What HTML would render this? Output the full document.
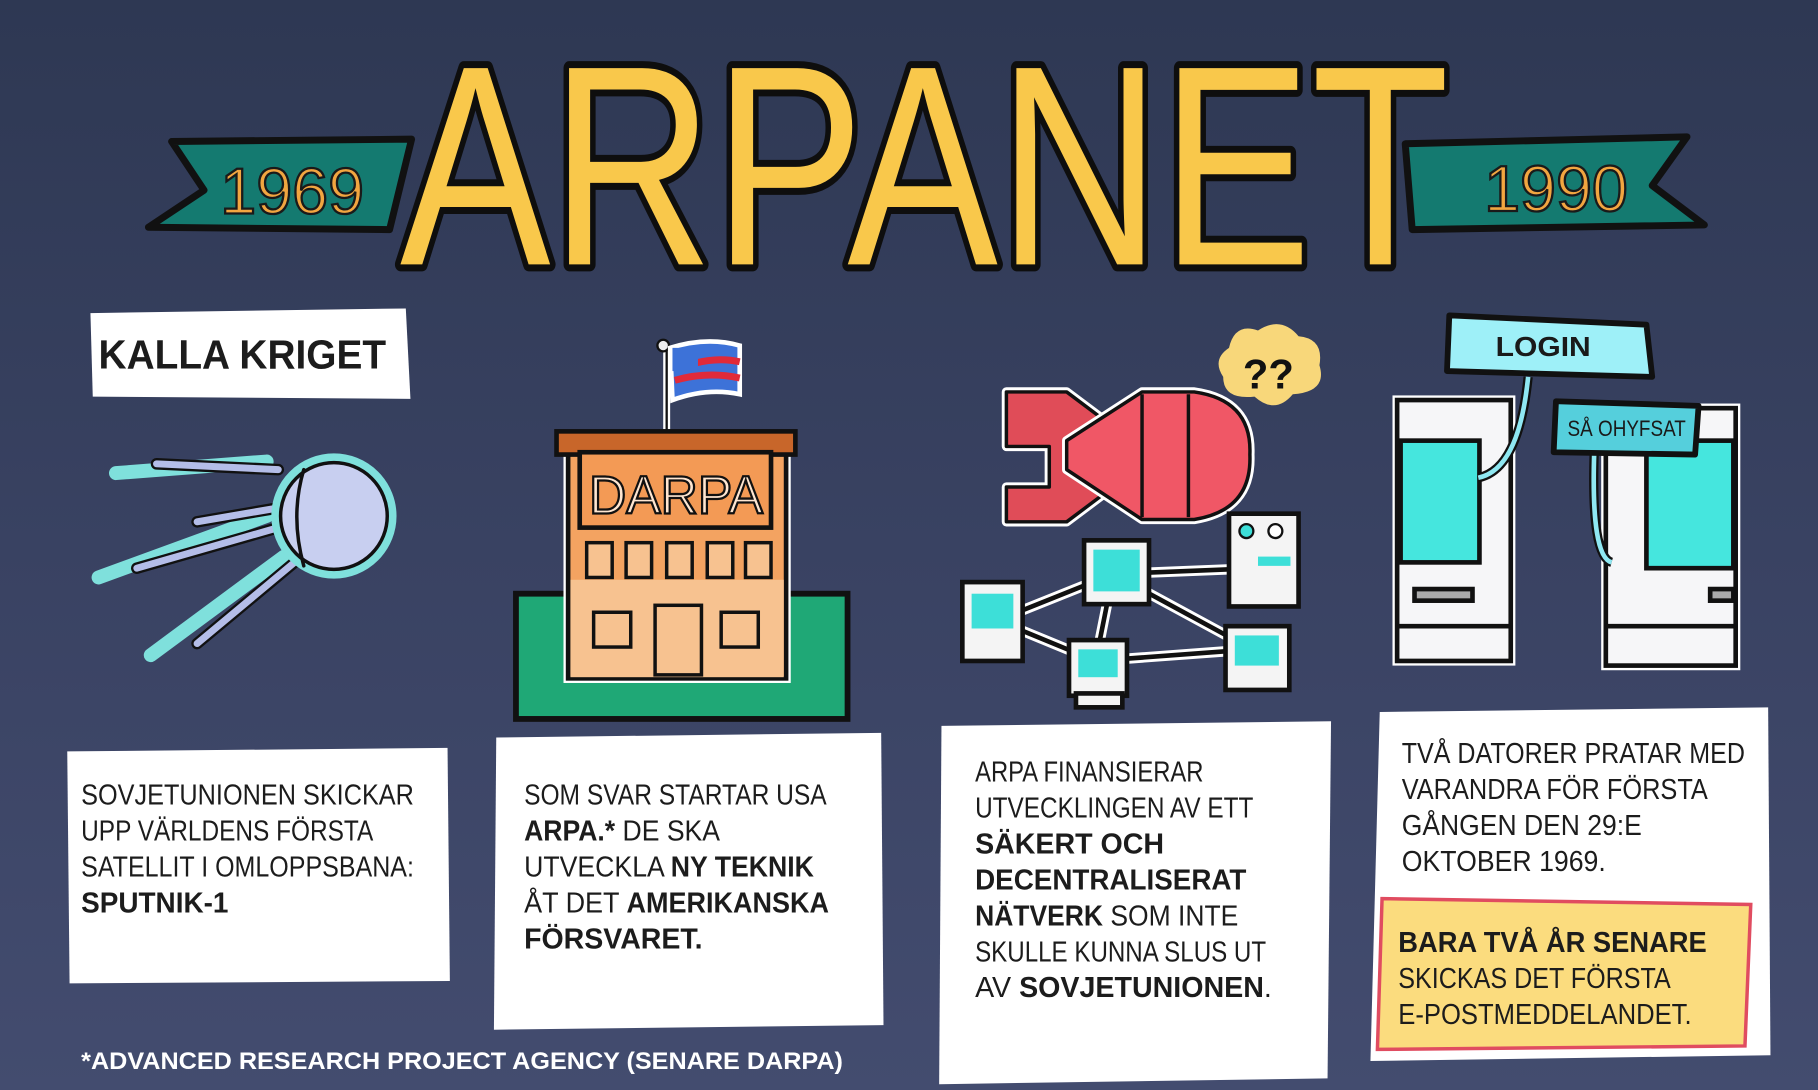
<!DOCTYPE html>
<html><head><meta charset="utf-8"><style>
html,body{margin:0;padding:0;background:#3a4365;}
svg{display:block;}
.t{font-family:"Liberation Sans",sans-serif;font-size:25px;fill:#1c1c1c;}
.b{font-weight:bold;}
</style></head><body>
<svg width="1818" height="1090" viewBox="0 0 1568 940" preserveAspectRatio="none" xmlns="http://www.w3.org/2000/svg">
<defs>
<linearGradient id="bg" x1="0" y1="0" x2="0" y2="1">
<stop offset="0" stop-color="#2e3853"/><stop offset="0.5" stop-color="#394262"/><stop offset="1" stop-color="#434c6f"/>
</linearGradient>
</defs>
<rect width="1568" height="940" fill="url(#bg)"/>

<!-- banners -->
<path d="M148,122 L355,120 L336,198 L128,196 L176,164 Z" fill="#147a70" stroke="#111" stroke-width="6" stroke-linejoin="round"/>
<text x="190" y="184" font-family="Liberation Sans,sans-serif" font-size="56" fill="#f2a640" stroke="#1a1a1a" stroke-width="2" textLength="124" lengthAdjust="spacingAndGlyphs">1969</text>
<path d="M1212,124 L1455,118 L1425,160 L1470,194 L1218,198 Z" fill="#147a70" stroke="#111" stroke-width="6" stroke-linejoin="round"/>
<text x="1280" y="182" font-family="Liberation Sans,sans-serif" font-size="56" fill="#f2a640" stroke="#1a1a1a" stroke-width="2" textLength="124" lengthAdjust="spacingAndGlyphs">1990</text>

<!-- title -->
<text x="345" y="228" font-family="Liberation Sans,sans-serif" font-size="246" fill="#f9c84b" stroke="#0e0e0e" stroke-width="12" paint-order="stroke" stroke-linejoin="round" textLength="905" lengthAdjust="spacingAndGlyphs">ARPANET</text>

<!-- kalla kriget -->
<path d="M78,270 L350,266 L354,344 L80,342 Z" fill="#fff"/>
<text x="85" y="318" font-family="Liberation Sans,sans-serif" font-weight="bold" font-size="35" fill="#1c1c1c" textLength="248" lengthAdjust="spacingAndGlyphs">KALLA KRIGET</text>

<!-- sputnik -->
<g stroke-linecap="round">
<path d="M100,408 L230,398 M85,498 L230,445 M130,565 L245,480" stroke="#7fe0dc" stroke-width="12"/>
<path d="M135,400 L240,405 M170,450 L240,438 M118,490 L240,455 M170,555 L260,480" stroke="#111" stroke-width="10"/>
<path d="M135,400 L240,405 M170,450 L240,438 M118,490 L240,455 M170,555 L260,480" stroke="#b4bde8" stroke-width="6"/>
<circle cx="288" cy="445" r="50" fill="#c8cff0" stroke="#7fe0dc" stroke-width="8"/>
<circle cx="288" cy="445" r="46" fill="#c8cff0" stroke="#111" stroke-width="3"/>
<path d="M262,405 Q250,445 262,488" stroke="#111" stroke-width="3" fill="none"/>
</g>

<!-- darpa -->
<rect x="445" y="512" width="286" height="108" fill="#1fa876" stroke="#111" stroke-width="5"/>
<line x1="575" y1="300" x2="575" y2="372" stroke="#fff" stroke-width="6"/>
<line x1="575" y1="300" x2="575" y2="372" stroke="#111" stroke-width="2"/>
<circle cx="572" cy="298" r="5" fill="#eee" stroke="#111" stroke-width="2"/>
<path d="M578,300 Q610,290 638,298 L638,340 Q610,334 580,345 Z" fill="#3d72d8" stroke="#fff" stroke-width="4"/>
<path d="M600,313 Q620,308 638,312 M582,328 Q610,320 638,326" stroke="#e02a3a" stroke-width="6" fill="none"/>
<rect x="580" y="300" width="22" height="20" fill="#3d72d8"/>
<rect x="490" y="380" width="188" height="205" fill="#f3a361" stroke="#fff" stroke-width="8"/>
<rect x="490" y="380" width="188" height="205" fill="#f3a361" stroke="#111" stroke-width="4"/>
<rect x="492" y="500" width="184" height="84" fill="#f7c290"/>
<rect x="480" y="372" width="206" height="20" fill="#c8662a" stroke="#111" stroke-width="4"/>
<rect x="500" y="390" width="165" height="65" fill="#f39a55" stroke="#111" stroke-width="4"/>
<text x="508" y="443" font-family="Liberation Sans,sans-serif" font-size="46" fill="#ffe6d0" stroke="#111" stroke-width="2" textLength="150" lengthAdjust="spacingAndGlyphs">DARPA</text>
<g fill="#f7c290" stroke="#111" stroke-width="3">
<rect x="506" y="468" width="22" height="30"/><rect x="540" y="468" width="22" height="30"/><rect x="575" y="468" width="22" height="30"/><rect x="610" y="468" width="22" height="30"/><rect x="643" y="468" width="22" height="30"/>
<rect x="512" y="528" width="32" height="30"/><rect x="622" y="528" width="32" height="30"/><rect x="565" y="522" width="40" height="60"/>
</g>

<!-- bomb -->
<g stroke="#111" stroke-width="3" stroke-linejoin="round">
<path d="M868,338 L920,338 L960,368 L960,420 L920,450 L868,450 L868,420 L905,420 L905,385 L868,385 Z" fill="#e04c58" stroke="#fff" stroke-width="8"/>
<path d="M868,338 L920,338 L960,368 L960,420 L920,450 L868,450 L868,420 L905,420 L905,385 L868,385 Z" fill="#e04c58"/>
<path d="M920,380 L985,338 L1030,338 Q1080,345 1078,392 Q1080,440 1030,448 L985,448 L920,405 Z" fill="#f05766" stroke="#fff" stroke-width="8"/>
<path d="M920,380 L985,338 L1030,338 Q1080,345 1078,392 Q1080,440 1030,448 L985,448 L920,405 Z" fill="#f05766"/>
<path d="M985,340 L985,446 M1025,340 L1025,446" fill="none"/>
</g>
<path d="M1060,300 Q1065,278 1085,285 Q1105,272 1120,290 Q1142,292 1138,315 Q1145,338 1115,340 Q1100,358 1082,342 Q1055,345 1055,325 Q1045,310 1060,300 Z" fill="#f8d77a"/>
<text x="1072" y="335" font-family="Liberation Sans,sans-serif" font-weight="bold" font-size="36" fill="#111">??</text>

<!-- network -->
<g stroke="#fff" stroke-width="9" fill="none" stroke-linecap="round"><path d="M860,535 L960,495 L1085,490 M960,495 L945,570 M860,535 L945,570 L1080,560 M960,495 L1080,560"/></g>
<g stroke="#111" stroke-width="4" fill="none"><path d="M860,535 L960,495 L1085,490 M960,495 L945,570 M860,535 L945,570 L1080,560 M960,495 L1080,560"/></g>
<g fill="#f4f4f4" stroke="#111" stroke-width="4">
<rect x="830" y="502" width="52" height="68"/><rect x="935" y="466" width="56" height="55"/><rect x="922" y="552" width="50" height="48"/><rect x="1057" y="540" width="55" height="55"/><rect x="1060" y="443" width="60" height="80"/>
<rect x="928" y="598" width="40" height="12"/>
</g>
<g fill="#3ddfd8"><rect x="838" y="512" width="36" height="30"/><rect x="943" y="474" width="40" height="36"/><rect x="930" y="560" width="34" height="24"/><rect x="1065" y="548" width="38" height="26"/><rect x="1085" y="480" width="28" height="8"/></g>
<circle cx="1075" cy="458" r="6" fill="#3ddfd8" stroke="#111" stroke-width="2"/><circle cx="1100" cy="458" r="6" fill="#fff" stroke="#111" stroke-width="2"/>

<!-- login computers -->
<g stroke="#111" stroke-width="4">
<rect x="1205" y="345" width="98" height="225" fill="#f6f6f8" stroke="#fff" stroke-width="8"/>
<rect x="1205" y="345" width="98" height="225" fill="#f6f6f8"/>
<rect x="1208" y="380" width="68" height="105" fill="#45e6de"/>
<rect x="1385" y="352" width="112" height="222" fill="#f6f6f8" stroke="#fff" stroke-width="8"/>
<rect x="1385" y="352" width="112" height="222" fill="#f6f6f8"/>
<rect x="1420" y="380" width="75" height="110" fill="#45e6de"/>
<rect x="1220" y="508" width="50" height="10" fill="#aaa"/>
<rect x="1475" y="508" width="20" height="10" fill="#aaa"/>
<line x1="1205" y1="540" x2="1303" y2="540"/><line x1="1385" y1="540" x2="1497" y2="540"/>
</g>
<path d="M1318,325 Q1310,405 1275,412 M1375,390 Q1372,480 1390,485" stroke="#111" stroke-width="8" fill="none"/>
<path d="M1318,325 Q1310,405 1275,412 M1375,390 Q1372,480 1390,485" stroke="#8fe8f2" stroke-width="4" fill="none"/>
<path d="M1250,272 L1420,280 L1425,325 L1248,320 Z" fill="#9ef0f8" stroke="#111" stroke-width="5" stroke-linejoin="round"/>
<text x="1290" y="307" font-family="Liberation Sans,sans-serif" font-weight="bold" font-size="24" fill="#1a1a1a" textLength="82" lengthAdjust="spacingAndGlyphs">LOGIN</text>
<path d="M1342,346 L1465,350 L1462,392 L1340,390 Z" fill="#55cfdc" stroke="#111" stroke-width="5" stroke-linejoin="round"/>
<text x="1352" y="376" font-family="Liberation Sans,sans-serif" font-size="19" fill="#1a1a1a" textLength="102" lengthAdjust="spacingAndGlyphs">SÅ OHYFSAT</text>

<!-- boxes -->
<path d="M58,648 L386,645 L388,846 L60,848 Z" fill="#fff"/>
<path d="M428,636 L760,632 L762,884 L426,888 Z" fill="#fff"/>
<path d="M812,626 L1148,622 L1145,930 L810,935 Z" fill="#fff"/>
<path d="M1190,614 L1525,610 L1527,910 L1182,915 Z" fill="#fff"/>
<path d="M1192,775 L1510,780 L1505,902 L1188,905 Z" fill="#fbdc7e" stroke="#e04c60" stroke-width="3"/>

<g lengthAdjust="spacingAndGlyphs">
<text class="t" x="70" y="694" textLength="287" lengthAdjust="spacingAndGlyphs">SOVJETUNIONEN SKICKAR</text>
<text class="t" x="70" y="725" textLength="252" lengthAdjust="spacingAndGlyphs">UPP VÄRLDENS FÖRSTA</text>
<text class="t" x="70" y="756" textLength="287" lengthAdjust="spacingAndGlyphs">SATELLIT I OMLOPPSBANA:</text>
<text class="t b" x="70" y="787" textLength="127" lengthAdjust="spacingAndGlyphs">SPUTNIK-1</text>

<text class="t" x="452" y="694" textLength="261" lengthAdjust="spacingAndGlyphs">SOM SVAR STARTAR USA</text>
<text class="t" x="452" y="725" textLength="169" lengthAdjust="spacingAndGlyphs"><tspan class="b">ARPA.*</tspan> DE SKA</text>
<text class="t" x="452" y="756" textLength="250" lengthAdjust="spacingAndGlyphs">UTVECKLA <tspan class="b">NY TEKNIK</tspan></text>
<text class="t" x="452" y="787" textLength="263" lengthAdjust="spacingAndGlyphs">ÅT DET <tspan class="b">AMERIKANSKA</tspan></text>
<text class="t b" x="452" y="818" textLength="154" lengthAdjust="spacingAndGlyphs">FÖRSVARET.</text>

<text class="t" x="841" y="674" textLength="197" lengthAdjust="spacingAndGlyphs">ARPA FINANSIERAR</text>
<text class="t" x="841" y="705" textLength="240" lengthAdjust="spacingAndGlyphs">UTVECKLINGEN AV ETT</text>
<text class="t b" x="841" y="736" textLength="163" lengthAdjust="spacingAndGlyphs">SÄKERT OCH</text>
<text class="t b" x="841" y="767" textLength="234" lengthAdjust="spacingAndGlyphs">DECENTRALISERAT</text>
<text class="t" x="841" y="798" textLength="227" lengthAdjust="spacingAndGlyphs"><tspan class="b">NÄTVERK</tspan> SOM INTE</text>
<text class="t" x="841" y="829" textLength="251" lengthAdjust="spacingAndGlyphs">SKULLE KUNNA SLUS UT</text>
<text class="t" x="841" y="860" textLength="256" lengthAdjust="spacingAndGlyphs">AV <tspan class="b">SOVJETUNIONEN</tspan>.</text>

<text class="t" x="1209" y="658" textLength="296" lengthAdjust="spacingAndGlyphs">TVÅ DATORER PRATAR MED</text>
<text class="t" x="1209" y="689" textLength="264" lengthAdjust="spacingAndGlyphs">VARANDRA FÖR FÖRSTA</text>
<text class="t" x="1209" y="720" textLength="207" lengthAdjust="spacingAndGlyphs">GÅNGEN DEN 29:E</text>
<text class="t" x="1209" y="751" textLength="176" lengthAdjust="spacingAndGlyphs">OKTOBER 1969.</text>
<text class="t b" x="1206" y="821" textLength="266" lengthAdjust="spacingAndGlyphs">BARA TVÅ ÅR SENARE</text>
<text class="t" x="1206" y="852" textLength="235" lengthAdjust="spacingAndGlyphs">SKICKAS DET FÖRSTA</text>
<text class="t" x="1206" y="883" textLength="253" lengthAdjust="spacingAndGlyphs">E-POSTMEDDELANDET.</text>
</g>

<text x="70" y="922" font-family="Liberation Sans,sans-serif" font-weight="bold" font-size="21" fill="#fff" textLength="657" lengthAdjust="spacingAndGlyphs">*ADVANCED RESEARCH PROJECT AGENCY (SENARE DARPA)</text>
</svg>
</body></html>
